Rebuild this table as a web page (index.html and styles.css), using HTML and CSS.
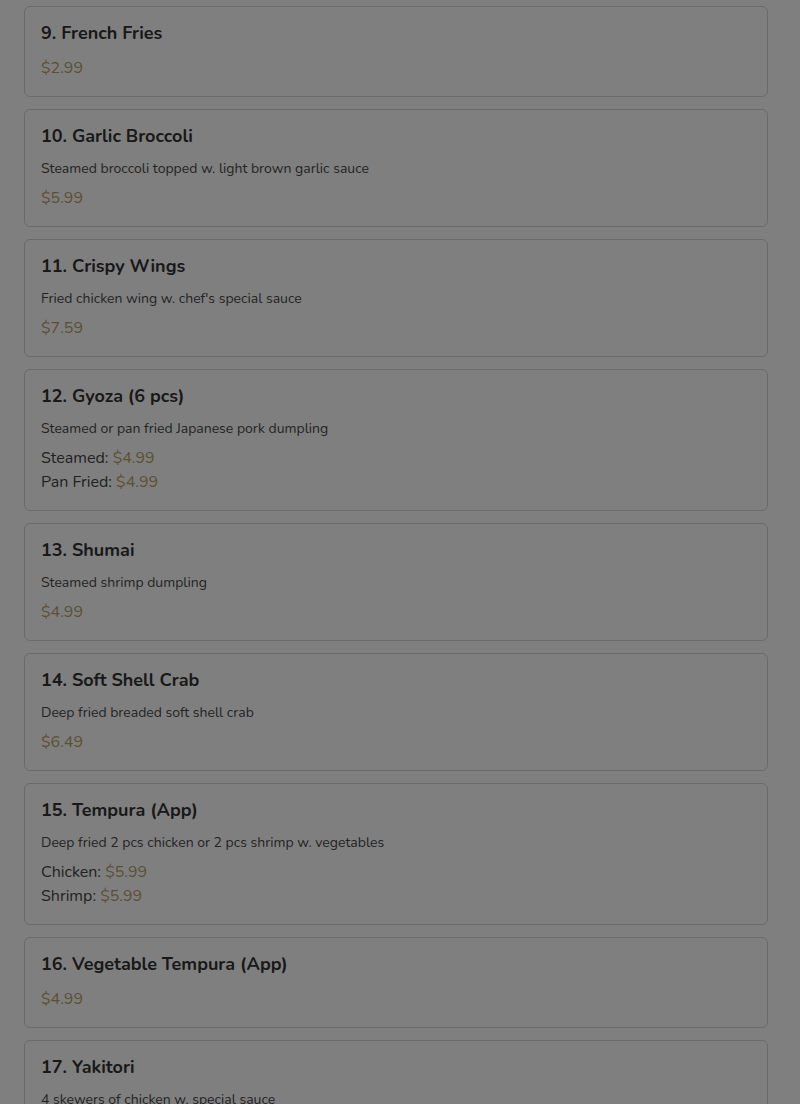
FILE: index.html
```html
<!DOCTYPE html>
<html lang="en">
<head>
<meta charset="utf-8">
<title>Menu</title>
<link rel="stylesheet" href="styles.css">
</head>
<body>
<main class="menu">
  <div class="card">
    <h3 class="name">9. French Fries</h3>
    <div class="price">$2.99</div>
  </div>
  <div class="card">
    <h3 class="name">10. Garlic Broccoli</h3>
    <p class="desc">Steamed broccoli topped w. light brown garlic sauce</p>
    <div class="price">$5.99</div>
  </div>
  <div class="card">
    <h3 class="name">11. Crispy Wings</h3>
    <p class="desc">Fried chicken wing w. chef's special sauce</p>
    <div class="price">$7.59</div>
  </div>
  <div class="card">
    <h3 class="name">12. Gyoza (6 pcs)</h3>
    <p class="desc">Steamed or pan fried Japanese pork dumpling</p>
    <div class="price"><span class="label">Steamed:</span> $4.99</div>
    <div class="price"><span class="label">Pan Fried:</span> $4.99</div>
  </div>
  <div class="card">
    <h3 class="name">13. Shumai</h3>
    <p class="desc">Steamed shrimp dumpling</p>
    <div class="price">$4.99</div>
  </div>
  <div class="card">
    <h3 class="name">14. Soft Shell Crab</h3>
    <p class="desc">Deep fried breaded soft shell crab</p>
    <div class="price">$6.49</div>
  </div>
  <div class="card">
    <h3 class="name">15. Tempura (App)</h3>
    <p class="desc">Deep fried 2 pcs chicken or 2 pcs shrimp w. vegetables</p>
    <div class="price"><span class="label">Chicken:</span> $5.99</div>
    <div class="price"><span class="label">Shrimp:</span> $5.99</div>
  </div>
  <div class="card">
    <h3 class="name">16. Vegetable Tempura (App)</h3>
    <div class="price">$4.99</div>
  </div>
  <div class="card">
    <h3 class="name">17. Yakitori</h3>
    <p class="desc">4 skewers of chicken w. special sauce</p>
    <div class="price">$5.99</div>
  </div>
</main>
<div class="overlay"></div>
</body>
</html>
```
FILE: styles.css
```css
html, body {
  margin: 0;
  padding: 0;
  background: #ffffff;
  font-family: "Nunito", "Lato", "Open Sans", sans-serif;
  color: #333333;
  overflow: hidden;
}
.menu {
  display: flex;
  flex-direction: column;
  gap: 12px;
  padding: 6px 32px 0 24px;
}
.card {
  border: 1px solid #d4d4d4;
  border-radius: 6px;
  padding: 16px;
  background: #ffffff;
  display: flex;
  flex-direction: column;
}
.name {
  margin: 0 0 12px;
  font-size: 18px;
  line-height: 21px;
  font-weight: 700;
  color: #333333;
}
.desc {
  margin: 0 0 7px;
  font-size: 14px;
  line-height: 20px;
  color: #484848;
}
.price {
  font-size: 16px;
  line-height: 24px;
  color: #bb9f68;
}
.label {
  color: #444444;
}
.overlay {
  position: fixed;
  inset: 0;
  background: rgba(0, 0, 0, 0.5);
}
```
